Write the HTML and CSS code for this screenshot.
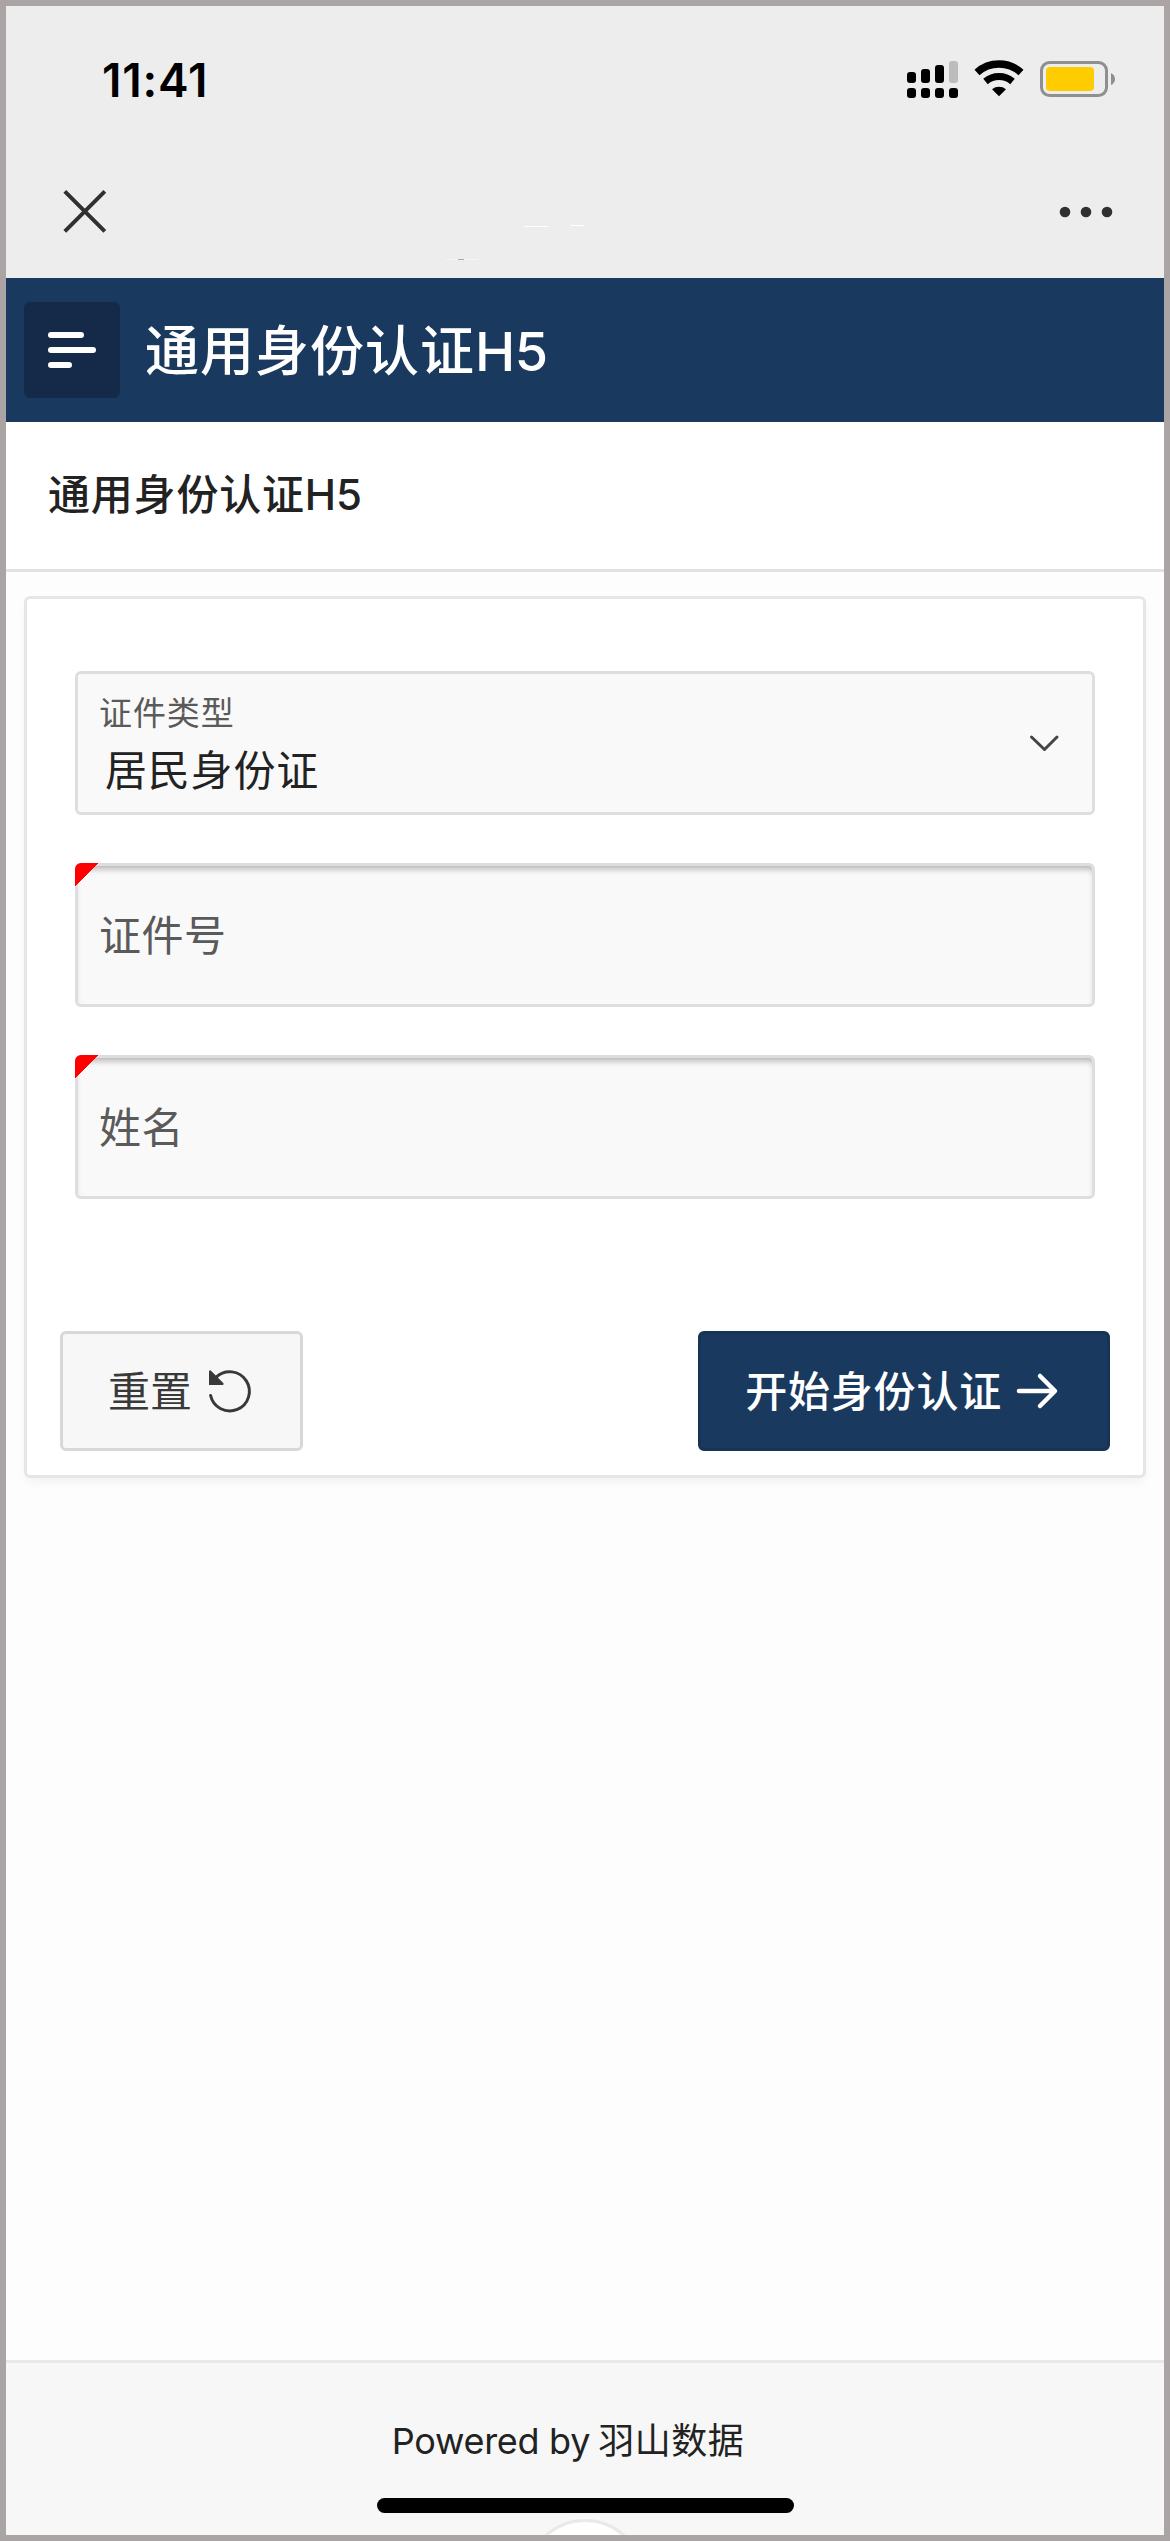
FILE: index.html
```
<!DOCTYPE html>
<html lang="zh-CN">
<head>
  <meta charset="UTF-8" />
  <meta name="viewport" content="width=device-width, initial-scale=1.0"/>
  <title>通用身份认证H5</title>
  <link rel="stylesheet" href="styles.css">
</head>
<body>
  <div class="screen">
    <div class="status-bar">
      <span class="time">11:41</span>
      <svg class="status-icons" width="210" height="40" viewBox="0 0 210 40">
        <!-- signal -->
        <rect x="1" y="12" width="9" height="11" rx="3"/>
        <rect x="15" y="9" width="9" height="14" rx="3"/>
        <rect x="29" y="5" width="9" height="18" rx="3"/>
        <rect x="43" y="1" width="9" height="22" rx="3" fill="#bcbcbc"/>
        <rect x="1" y="28" width="9" height="10" rx="3"/>
        <rect x="15" y="28" width="9" height="10" rx="3"/>
        <rect x="29" y="28" width="9" height="10" rx="3"/>
        <rect x="43" y="28" width="9" height="10" rx="3"/>
        <!-- wifi -->
        <path d="M71 12.500a33 33 0 0 1 44 0" fill="none" stroke="#000" stroke-width="7.500"/>
        <path d="M79.500 21.500a21 21 0 0 1 27 0" fill="none" stroke="#000" stroke-width="7"/>
        <path d="M86 29.200a11.500 11.500 0 0 1 14 0L93 36.200z"/>
        <!-- battery -->
        <rect x="135.500" y="2.500" width="65" height="33" rx="8" fill="none" stroke="#8f8f8f" stroke-width="3"/>
        <rect x="140" y="7" width="48" height="24" rx="4" fill="#ffcc00"/>
        <path d="M205 13q4 2 4 6t-4 6z" fill="#8f8f8f"/>
      </svg>
    </div>
    <div class="nav-bar">
      <svg width="44" height="44" viewBox="0 0 44 44">
        <path d="M1.800 1.300L41.800 41.300M41.800 1.300L1.800 41.300" stroke="#303030" stroke-width="4"/>
      </svg>
      <svg class="nav-marks" width="150" height="44" viewBox="0 0 150 44">
        <path d="M78.500 36.500h24M124.500 35.500h14" stroke="#fff"/>
        <path d="M0 69.500h32" stroke="#f4f4f4"/>
        <path d="M12 69.500h6" stroke="#a9a9b4"/>
      </svg>
      <svg width="54" height="12" viewBox="0 0 54 12" fill="#303030">
        <circle cx="6" cy="6" r="5.300"/>
        <circle cx="27" cy="6" r="5.300"/>
        <circle cx="48" cy="6" r="5.300"/>
      </svg>
    </div>

    <header class="header">
      <button class="menu">
        <svg width="48" height="36" viewBox="0 0 48 36" fill="#fff">
          <rect width="36" height="6" rx="3"/>
          <rect y="15" width="48" height="6" rx="3"/>
          <rect y="30" width="24" height="6" rx="3"/>
        </svg>
      </button>
      <span class="app-name">通用身份认证<span class="latin">H5</span></span>
    </header>
    <h1 class="page-title">通用身份认证<span class="latin">H5</span></h1>

    <main class="content">
      <div class="card">
        <div class="field select">
          <div class="field-text">
            <span class="label">证件类型</span>
            <span class="value">居民身份证</span>
          </div>
          <svg width="28" height="17" viewBox="0 0 28 17">
            <path d="M1.500 2L14.500 14.500L27 2" fill="none" stroke="#444" stroke-width="3" stroke-linecap="round" stroke-linejoin="round"/>
          </svg>
        </div>
        <div class="field required">
          <span class="placeholder">证件号</span>
        </div>
        <div class="field required">
          <span class="placeholder">姓名</span>
        </div>
        <div class="buttons">
          <button class="btn">
            <span class="btn-text">重置</span>
            <svg class="icon-reset" width="42" height="42" viewBox="0 0 42 42">
              <path d="M1.600 25.500A19.600 19.600 0 1 0 7.200 7.200" fill="none" stroke="#393939" stroke-width="3" stroke-linecap="round"/>
              <path d="M0 1.200Q.8-.5 2 .8L14.500 13.200Q15.200 15 13.500 15H0z" fill="#393939"/>
            </svg>
          </button>
          <button class="btn primary">
            <span class="btn-text">开始身份认证</span>
            <svg class="icon-next" width="42" height="36" viewBox="0 0 42 36">
              <path d="M3 18H38M24 3L39 18L24 33" fill="none" stroke="#fff" stroke-width="4.500" stroke-linecap="round" stroke-linejoin="round"/>
            </svg>
          </button>
        </div>
      </div>
    </main>

    <footer class="footer">
      <div class="powered"><span class="powered-by">Powered by</span> <span class="company">羽山数据</span></div>
      <div class="home-bar"></div>
      <div class="circle"></div>
    </footer>
  </div>
</body>
</html>
```
FILE: styles.css
```
* {
  box-sizing: border-box;
}
body {
  margin: 0;
  font-family: "Noto Sans CJK SC", sans-serif;
  color: #222;
}
svg {
  display: block;
  flex: none;
  overflow: visible;
}
button {
  font-family: inherit;
  cursor: pointer;
}
.latin {
  font-family: Inter, sans-serif;
  line-height: 1;
  letter-spacing: -0.5px;
}
.screen {
  display: flex;
  flex-direction: column;
  height: 2541px;
  border: 6px solid #aaa4a4;
  background: #fdfdfd;
  overflow: hidden;
}

/* phone bars */
.status-bar {
  display: flex;
  justify-content: space-between;
  height: 164px;
  padding: 54px 48px 0 96px;
  background: #ededed;
}
.time {
  height: 40px;
  font-family: Inter, sans-serif;
  font-size: 46px;
  font-weight: 600;
  line-height: 40px;
  letter-spacing: 0.8px;
  color: #000;
}
.nav-bar {
  display: flex;
  justify-content: space-between;
  align-items: center;
  height: 108px;
  padding: 0 51px 24px 57px;
  background: #ededed;
}
.nav-marks {
  margin-right: 125px;
}

/* page header */
.header {
  display: flex;
  align-items: center;
  gap: 25px;
  height: 144px;
  padding: 0 18px;
  background: #1a395f;
}
.menu {
  display: flex;
  align-items: center;
  justify-content: center;
  width: 96px;
  height: 96px;
  border: none;
  border-radius: 6px;
  background: #142a48;
}
.app-name {
  padding-bottom: 4px;
  font-size: 54px;
  font-weight: 500;
  line-height: 72px;
  letter-spacing: 1px;
  color: #fff;
}
.page-title {
  height: 150px;
  margin: 0;
  padding: 34px 42px;
  border-bottom: 3px solid #e2e2e2;
  background: #fff;
  font-size: 42px;
  font-weight: 500;
  line-height: 72px;
  letter-spacing: 0.8px;
}
.page-title .latin {
  letter-spacing: 0;
}

/* form */
.content {
  flex: 1;
  padding: 24px 18px;
}
.card {
  display: flex;
  flex-direction: column;
  gap: 48px;
  height: 882px;
  padding: 72px 48px 24px;
  border: 3px solid #e6e6e6;
  border-radius: 6px;
  background: #fff;
  box-shadow: 0 6px 12px -3px rgba(0, 0, 0, 0.06);
}
.field {
  position: relative;
  display: flex;
  align-items: center;
  justify-content: space-between;
  height: 144px;
  padding: 0 34px 0 21px;
  border: 3px solid #dedede;
  border-radius: 6px;
  background: #f9f9f9;
}
.field-text {
  display: flex;
  flex-direction: column;
  padding-top: 2px;
}
.label {
  font-size: 33px;
  line-height: 48px;
  letter-spacing: 0.9px;
  color: #5a5a5a;
}
.value {
  padding-left: 6px;
  font-size: 42px;
  line-height: 66px;
  letter-spacing: 0.8px;
}
.required {
  box-shadow: inset 0 6px 6px -3px rgba(0, 0, 0, 0.28);
}
.required::before {
  content: "";
  position: absolute;
  top: -3px;
  left: -3px;
  width: 24px;
  height: 24px;
  border-top-left-radius: 6px;
  background: linear-gradient(135deg, #f00 50%, transparent 50%);
}
.placeholder {
  padding-bottom: 4px;
  font-size: 42px;
  line-height: 60px;
  letter-spacing: 0.5px;
  color: #5a5a5a;
}
.buttons {
  display: flex;
  justify-content: space-between;
  margin: auto -15px 0;
}
.btn {
  display: flex;
  align-items: center;
  gap: 17px;
  height: 120px;
  padding: 0 49px 0 45px;
  border: 3px solid #d8d8d8;
  border-radius: 6px;
  background: #f7f7f7;
  font-size: 42px;
  line-height: 60px;
  color: #393939;
}
.btn-text {
  padding-bottom: 4px;
}
.primary {
  gap: 14px;
  padding-right: 49px;
  padding-left: 44px;
  border-color: #173356;
  background: #1a395f;
  font-weight: 500;
  letter-spacing: 0.8px;
  color: #fff;
}

/* footer */
.footer {
  position: relative;
  display: flex;
  flex-direction: column;
  align-items: center;
  height: 175px;
  border-top: 3px solid #e9e9e9;
  background: #f7f7f7;
  overflow: hidden;
}
.powered {
  height: 60px;
  margin: 45px 34px 0 0;
  font-size: 36px;
  line-height: 60px;
}
.powered-by {
  font-family: Inter, sans-serif;
  letter-spacing: -0.3px;
}
.company {
  letter-spacing: 0.5px;
}
.home-bar {
  width: 417px;
  height: 15px;
  margin-top: 30px;
  border-radius: 8px;
  background: #000;
}
.circle {
  position: absolute;
  top: 156px;
  left: 519px;
  width: 120px;
  height: 120px;
  border: 3px solid #e9e9e9;
  border-radius: 50%;
  background: #fff;
}
```
